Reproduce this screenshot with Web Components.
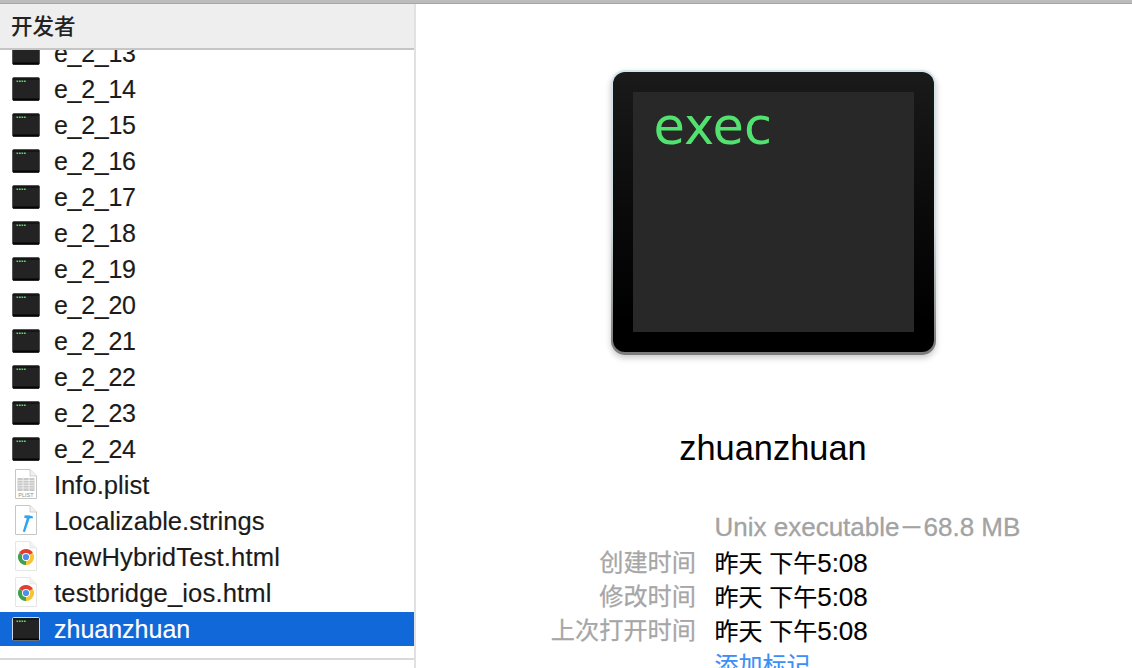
<!DOCTYPE html>
<html lang="zh-CN">
<head>
<meta charset="utf-8">
<title>Finder</title>
<style>
html,body{margin:0;height:668px;overflow:hidden;background:#fff}
body{font-family:"Liberation Sans","Noto Sans CJK SC",sans-serif}
</style>
</head>
<body>
<finder-window>
  <file-list slot="list" heading="开发者">
    <file-row kind="exec">e_2_13</file-row>
    <file-row kind="exec">e_2_14</file-row>
    <file-row kind="exec">e_2_15</file-row>
    <file-row kind="exec">e_2_16</file-row>
    <file-row kind="exec">e_2_17</file-row>
    <file-row kind="exec">e_2_18</file-row>
    <file-row kind="exec">e_2_19</file-row>
    <file-row kind="exec">e_2_20</file-row>
    <file-row kind="exec">e_2_21</file-row>
    <file-row kind="exec">e_2_22</file-row>
    <file-row kind="exec">e_2_23</file-row>
    <file-row kind="exec">e_2_24</file-row>
    <file-row kind="plist">Info.plist</file-row>
    <file-row kind="strings">Localizable.strings</file-row>
    <file-row kind="chrome">newHybridTest.html</file-row>
    <file-row kind="chrome">testbridge_ios.html</file-row>
    <file-row kind="exec" selected>zhuanzhuan</file-row>
  </file-list>
  <info-pane slot="info" name="zhuanzhuan">
    <info-line slot="rows" kind="summary">Unix executable<span class="cjk">－</span>68.8 MB</info-line>
    <info-line slot="rows" label="创建时间"><span class="cjk">昨天 下午</span>5:08</info-line>
    <info-line slot="rows" label="修改时间"><span class="cjk">昨天 下午</span>5:08</info-line>
    <info-line slot="rows" label="上次打开时间"><span class="cjk">昨天 下午</span>5:08</info-line>
    <info-line slot="rows" kind="link"><span class="cjk">添加标记</span></info-line>
  </info-pane>
</finder-window>
<script>
const FONT = '"Liberation Sans","Noto Sans CJK SC",sans-serif';
const page = (stroke) => `<path d="M3.500 .5H18L24.500 7V29.500H3.500Z" fill="#fff" stroke="${stroke}"/><path d="M18 .5V7H24.500" fill="#f1f1f1" stroke="${stroke}" stroke-width=".8"/>`;
const ICONS = {
  exec: `<svg width="28" height="24" viewBox="0 0 28 24"><rect x=".5" y=".5" width="27" height="23" rx="1.500" fill="#232323" stroke="#555"/><rect x="1" y="1" width="26" height="2" fill="#161616"/><rect x="1" y="21.500" width="26" height="2" fill="#050505"/><path d="M4.500 4.300h1.700M7 4.300h1.700M9.500 4.300h1.700M12 4.300h1.700" stroke="#54d86e" stroke-width="1.500"/></svg>`,
  plist: `<svg width="28" height="32" viewBox="0 0 28 32">${page('#c6c6c6')}<rect x="5.500" y="9" width="17" height="13" fill="#c8c8c8"/><path d="M5.500 11.500h17M5.500 14h17M5.500 16.500h17M5.500 19h17" stroke="#efefef" stroke-width=".8"/><path d="M11 9v13M17 9v13" stroke="#efefef"/><text x="14" y="28" text-anchor="middle" font-family="Liberation Sans" font-size="5.500" fill="#8a8a8a">PLIST</text></svg>`,
  strings: `<svg width="28" height="32" viewBox="0 0 28 32">${page('#c6c6c6')}<path d="M12.500 10.500 Q16.500 9.800 21 11.500 L20.600 13.500 Q18.800 13 17.600 13.400 L13 27 L10.800 26.500 L14.800 13.200 Q13.800 12.800 12.300 13.100Z" fill="#2fa5ee"/></svg>`,
  chrome: `<svg width="28" height="32" viewBox="0 0 28 32">${page('#e6e6e6')}<path d="M14 16L7.070 12A8 8 0 0 1 20.930 12Z" fill="#e0402f"/><path d="M14 16L20.930 12A8 8 0 0 1 14 24Z" fill="#f6c52f"/><path d="M14 16L14 24A8 8 0 0 1 7.070 12Z" fill="#3aa251"/><circle cx="14" cy="16" r="4" fill="#fff"/><circle cx="14" cy="16" r="3.100" fill="#4f8df0"/></svg>`
};

function define(name, html, init){
  customElements.define(name, class extends HTMLElement{
    constructor(){
      super();
      this.attachShadow({mode:'open'}).innerHTML = html;
    }
    connectedCallback(){ if(init) init(this, this.shadowRoot); }
  });
}

define('finder-window', `<style>
  :host{display:flex;flex-direction:column;width:1132px;height:668px;overflow:hidden;background:#fff}
  .top{flex:none;height:3px;background:#bcbcbc;border-bottom:1px solid #a6a6a6}
  .body{flex:1;min-height:0;display:flex}
</style>
<div class="top"></div>
<div class="body"><slot name="list"></slot><slot name="info"></slot></div>`);

define('file-list', `<style>
  :host{flex:none;display:flex;flex-direction:column;width:414px;height:664px;border-right:2px solid #e1e1e1;overflow:hidden;background:#fff;font:25.600px ${FONT};color:#1b1b1b}
  header{position:relative;z-index:1;flex:none;height:41px;background:#eeeeee;border-bottom:2px solid #c5c5c5;padding:0 0 3px 11px;display:flex;align-items:center;font-size:21.500px;font-weight:500;color:#222}
  .rows{flex:none;height:623px;margin-top:-15px;overflow:hidden}
  footer{flex:none;height:6px;border-top:2px solid #d9d9d9;background:#fff}
</style>
<header></header>
<div class="rows"><slot></slot></div>
<footer></footer>`, (el, root) => { root.querySelector('header').textContent = el.getAttribute('heading'); });

define('file-row', `<style>
  :host{display:block;height:36px;padding:1px 0;box-sizing:border-box}
  :host([kind="exec"]){font-size:25px;letter-spacing:-.3px}
  :host([selected]){letter-spacing:0}
  :host([kind="chrome"]){letter-spacing:.15px}
  .row{height:34px;display:flex;align-items:center;padding-left:12px;gap:14px;white-space:nowrap;-webkit-text-stroke:.15px currentColor}
  .ico{flex:none;width:28px;height:34px;display:flex;align-items:center;justify-content:center}
  svg{display:block}
  :host([selected]) .row{background:#1168d8;color:#fff}
  :host([selected]) svg rect:first-child{stroke:#cfd8e6}
</style>
<div class="row"><span class="ico"></span><slot></slot></div>`, (el, root) => { root.querySelector('.ico').innerHTML = ICONS[el.getAttribute('kind')]; });

define('big-exec-icon', `<style>
  :host{flex:none;display:block;width:325px;height:285px;padding:2px 2px 3px;box-sizing:border-box;border-radius:14px;background:linear-gradient(#d3e6ec,#cfdcdf 55%,#7c7c7c 97%);box-shadow:0 3px 6px rgba(0,0,0,.22)}
  .case{height:100%;box-sizing:border-box;padding:20px;border-radius:12px;background:linear-gradient(#1a1a1a,#0a0a0a 50%,#000 90%)}
  .screen{height:100%;box-sizing:border-box;background:#282828;padding:2px 0 0 21px;font:51px/66px "DejaVu Sans",sans-serif;color:#52e26f}
</style>
<div class="case"><div class="screen">exec</div></div>`);

define('info-pane', `<style>
  :host{flex:1;min-width:0;display:flex;flex-direction:column;align-items:center;padding:66px 2px 0 0;font:26px ${FONT};color:#000}
  h1{margin:73px 0 42px;font:400 34.400px/40px ${FONT}}
  .grid{align-self:stretch;display:flex;flex-direction:column}
</style>
<big-exec-icon></big-exec-icon>
<h1></h1>
<div class="grid"><slot name="rows"></slot></div>`, (el, root) => { root.querySelector('h1').textContent = el.getAttribute('name'); });

define('info-line', `<style>
  :host{display:grid;grid-template-columns:280px 1fr;column-gap:18.500px;line-height:34px;height:34px;white-space:nowrap;-webkit-text-stroke:.15px currentColor}
  :host([kind="summary"]){color:#a3a3a3;margin-bottom:2px;-webkit-text-stroke:.3px #a3a3a3}
  :host([kind="link"]){color:#3b8ff6}
  ::slotted(.cjk){font-size:24px}
  .k{text-align:right;color:#a6a6a6;font-size:24.200px;-webkit-text-stroke:.25px #a6a6a6}
</style>
<span class="k"></span><span><slot></slot></span>`, (el, root) => { root.querySelector('.k').textContent = el.getAttribute('label') || ''; });
</script>
</body>
</html>
